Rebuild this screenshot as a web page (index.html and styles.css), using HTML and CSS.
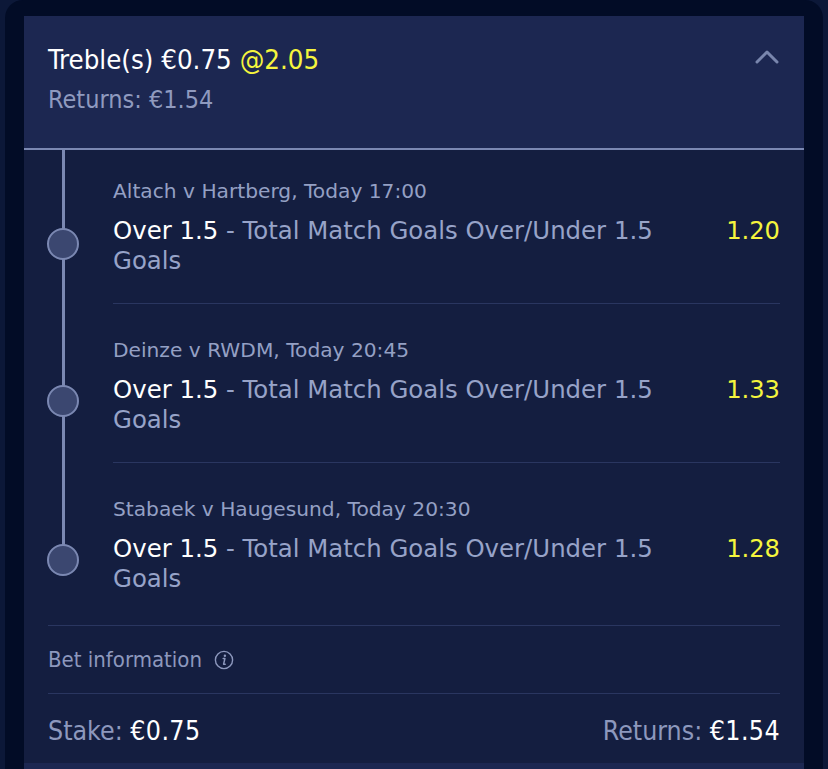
FILE: index.html
```html
<!DOCTYPE html>
<html lang="en">
<head>
<meta charset="utf-8">
<title>Treble bet slip</title>
<link rel="stylesheet" href="styles.css">
</head>
<body>
<div class="frame">
  <div class="card">
    <div class="head">
      <div class="title">Treble(s) €0.75 <span class="odds-y">@2.05</span></div>
      <div class="returns">Returns: €1.54</div>
      <svg class="chev" width="26" height="16" viewBox="0 0 26 16"><path d="M3 13 L13 3 L23 13" fill="none" stroke="#7986ad" stroke-width="3" stroke-linecap="round" stroke-linejoin="round"/></svg>
    </div>
    <div class="legs">
      <div class="leg">
        <div class="meta">Altach v Hartberg, Today 17:00</div>
        <div class="sel">
          <div class="sel-text"><span class="pick">Over 1.5</span> - Total Match Goals Over/Under 1.5 Goals</div>
          <div class="price">1.20</div>
        </div>
      </div>
      <div class="leg">
        <div class="meta">Deinze v RWDM, Today 20:45</div>
        <div class="sel">
          <div class="sel-text"><span class="pick">Over 1.5</span> - Total Match Goals Over/Under 1.5 Goals</div>
          <div class="price">1.33</div>
        </div>
      </div>
      <div class="leg">
        <div class="meta">Stabaek v Haugesund, Today 20:30</div>
        <div class="sel">
          <div class="sel-text"><span class="pick">Over 1.5</span> - Total Match Goals Over/Under 1.5 Goals</div>
          <div class="price">1.28</div>
        </div>
      </div>
    </div>
    <div class="info">
      <span>Bet information</span>
      <svg class="info-icon" width="20" height="20" viewBox="0 0 20 20"><circle cx="10" cy="10" r="8.6" fill="none" stroke="#8d98bd" stroke-width="1.4"/><circle cx="10.9" cy="5.8" r="1.2" fill="#8d98bd"/><path d="M9.2 8.6 H10.9 L9.6 14.2 H11.2" fill="none" stroke="#8d98bd" stroke-width="1.5" stroke-linecap="round" stroke-linejoin="round"/></svg>
    </div>
    <div class="totals">
      <div><span class="muted">Stake:</span> <span class="white">€0.75</span></div>
      <div><span class="muted">Returns:</span> <span class="white">€1.54</span></div>
    </div>
  </div>
  <div class="next"></div>
</div>
</body>
</html>
```
FILE: styles.css
```css
html, body {
  margin: 0;
  padding: 0;
}
body {
  background: #0c1838;
  width: 828px;
  height: 769px;
  overflow: hidden;
  font-family: "DejaVu Sans", Verdana, sans-serif;
  color: #ffffff;
}
.frame {
  margin: 0 5px;
  height: 769px;
  background: #020c26;
  border-radius: 18px 18px 0 0;
  padding: 16px 19px 0;
  box-sizing: border-box;
  overflow: hidden;
}
.card {
  background: #141e40;
}
.head {
  position: relative;
  background: #1c2751;
  padding: 30px 24px 34px;
  border-bottom: 2px solid #7b88b2;
  font-family: "DejaVu Sans Condensed", "DejaVu Sans", sans-serif;
  font-stretch: condensed;
}
.title {
  font-size: 27.4px;
  line-height: 28px;
  color: #ffffff;
}
.odds-y {
  color: #f5f53d;
}
.returns {
  margin-top: 12px;
  font-size: 25px;
  line-height: 28px;
  color: #8f9abf;
}
.chev {
  position: absolute;
  right: 24px;
  top: 33px;
}
.legs {
  padding: 0 24px 0 89px;
}
.leg {
  position: relative;
  padding: 34px 0 27px;
  border-bottom: 1px solid #2a3660;
}
.leg:first-child {
  padding-top: 29px;
}
.leg:first-child .sel::before {
  top: 12px;
}
.leg:last-child {
  border-bottom: none;
  padding-bottom: 31px;
}
.leg::before {
  content: "";
  position: absolute;
  left: -51px;
  width: 3px;
  top: 0;
  bottom: -1px;
  background: #7b88b2;
}
.leg:first-child::before {
  top: -2px;
}
.leg:last-child::before {
  bottom: auto;
  height: 98px;
}
.meta {
  font-size: 20.2px;
  line-height: 24px;
  color: #94a0c4;
  margin-bottom: 13px;
}
.sel {
  position: relative;
  display: flex;
  align-items: flex-start;
}
.sel::before {
  content: "";
  position: absolute;
  left: -66px;
  top: 10px;
  width: 28px;
  height: 28px;
  border-radius: 50%;
  background: #3b4770;
  border: 2px solid #7b88b2;
}
.sel-text {
  flex: 1;
  font-size: 24.4px;
  line-height: 30px;
  color: #97a3c8;
}
.pick {
  color: #ffffff;
}
.price {
  margin-left: 20px;
  font-size: 24.2px;
  line-height: 30px;
  color: #f5f53d;
}
.info {
  margin: 0 24px;
  border-top: 1px solid #2a3660;
  border-bottom: 1px solid #2a3660;
  padding: 20px 0 19px;
  display: flex;
  align-items: center;
  gap: 12px;
  font-family: "DejaVu Sans Condensed", "DejaVu Sans", sans-serif;
  font-stretch: condensed;
  font-size: 22px;
  line-height: 28px;
  color: #8d98bd;
}
.info-icon {
  display: block;
}
.totals {
  display: flex;
  justify-content: space-between;
  padding: 22px 24px 17px;
  font-family: "DejaVu Sans Condensed", "DejaVu Sans", sans-serif;
  font-stretch: condensed;
  font-size: 26.5px;
  line-height: 30px;
}
.muted {
  color: #8d98bd;
}
.white {
  color: #ffffff;
  letter-spacing: 0.4px;
}
.next {
  height: 20px;
  background: #1c2751;
  margin-top: 0;
}
```
